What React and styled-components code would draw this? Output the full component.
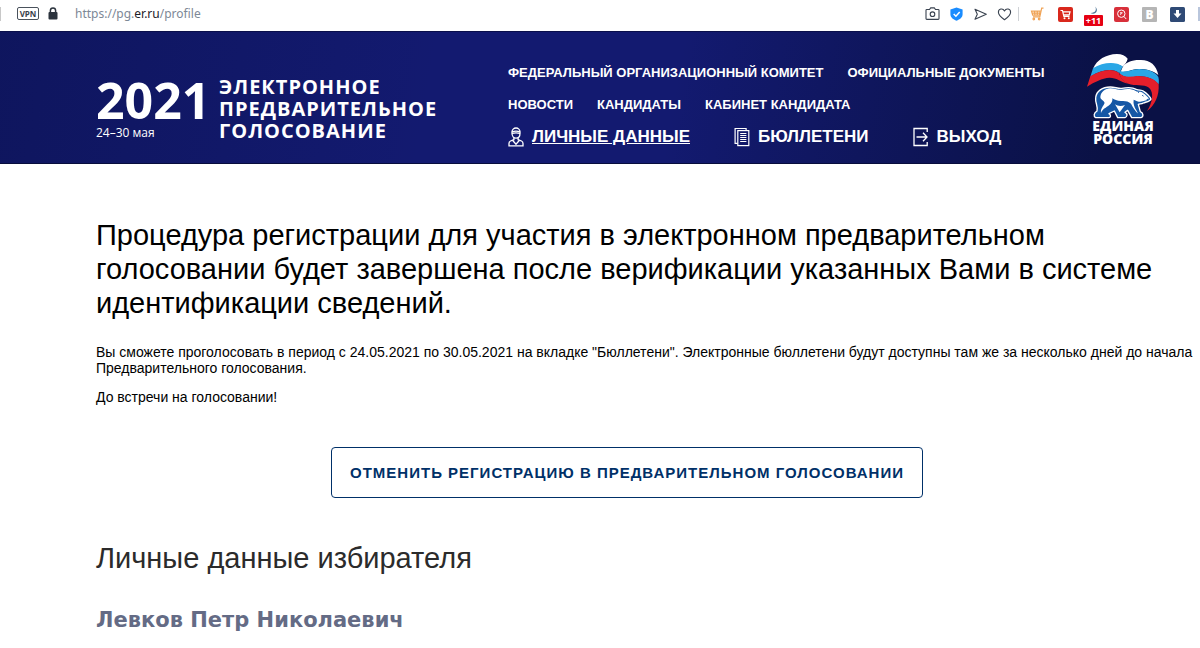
import React from 'react';
import styled, { createGlobalStyle } from 'styled-components';

const GlobalStyle = createGlobalStyle`
  *, *::before, *::after {
    box-sizing: border-box;
  }

  body {
    margin: 0;
    background: #fff;
    color: #000;
    font-family: "Liberation Sans", Arial, sans-serif;
  }
`;

/* browser bar */

const BrowserBar = styled.div`
  display: flex;
  align-items: center;
  justify-content: space-between;
  height: 31px;
  padding-bottom: 4px;
  background: #fff;
`;

const AddressArea = styled.div`
  display: flex;
  align-items: center;
`;

const BarEdge = styled.span`
  width: ${props => (props.$end ? 2 : 1)}px;
  height: 14px;
  margin-left: ${props => (props.$end ? 13 : 0)}px;
  background: ${props => (props.$end ? '#b9c6dc' : '#c8c8c8')};
`;

const VpnBadge = styled.span`
  width: 22px;
  height: 13px;
  margin: 0 9px 0 16px;
  border: 1px solid #4a525c;
  border-radius: 2px;
  color: #39424d;
  font: bold 8px/11px "Open Sans", sans-serif;
  text-align: center;
`;

const Address = styled.span`
  margin-left: 17px;
  color: #7d8896;
  font: 12px/16px "Noto Sans", sans-serif;

  b {
    color: #1b2028;
    font-weight: 400;
  }
`;

const Tools = styled.div`
  display: flex;
  align-items: center;
  gap: ${props => props.$gap}px;
`;

const ToolButton = styled.button`
  position: relative;
  display: block;
  width: 15px;
  height: 16px;
  padding: 0;
  border: 0;
  background: none;
  color: #3a4350;

  svg {
    display: block;
    width: 15px;
    height: 16px;
  }
`;

const ToolDivider = styled.span`
  width: 1px;
  height: 14px;
  margin: 0 11px 0 6px;
  background: #cfd2d6;
`;

const ToolCount = styled.span`
  position: absolute;
  top: 9px;
  left: -2px;
  width: 19px;
  height: 11px;
  border-radius: 1px;
  background: #e60012;
  color: #fff;
  font: bold 9px/11px "Open Sans", sans-serif;
  text-align: center;
`;

/* site header */

const Header = styled.header`
  display: grid;
  grid-template-columns: 412px 1fr 74px;
  align-items: start;
  height: 133px;
  padding: 0 40px 0 96px;
  border-top: 1px solid #0a0f4a;
  border-bottom: 1px solid #080d3c;
  background:
    linear-gradient(100deg, rgba(10, 17, 76, 0.5) 0%, rgba(16, 26, 112, 0) 36%, rgba(16, 26, 112, 0) 56%, #0a1145 92%),
    #131a70;
  color: #fff;
`;

const Brand = styled.a`
  display: flex;
  gap: 12px;
  padding-top: 44px;
  color: #fff;
  font-family: "Open Sans", "Noto Sans", sans-serif;
  text-decoration: none;
`;

const BrandDate = styled.div`
  width: 111px;
`;

const BrandYear = styled.div`
  font-size: 50px;
  font-weight: 700;
  line-height: 48px;
`;

const BrandDays = styled.div`
  font-size: 12px;
  line-height: 18px;
`;

const BrandTitle = styled.div`
  font-size: 20px;
  font-weight: 700;
  line-height: 22px;
  letter-spacing: 1px;
`;

const Nav = styled.nav`
  display: flex;
  flex-direction: column;
  padding-top: 25px;
`;

const NavRow = styled.div`
  display: flex;
  gap: ${props => (props.$large ? 44 : 24)}px;
  line-height: 32px;
  white-space: nowrap;
`;

const NavLink = styled.a`
  color: #fff;
  font-size: 13px;
  font-weight: 700;
  text-decoration: none;
`;

const AccountLink = styled.a`
  display: flex;
  align-items: center;
  gap: 8px;
  color: #fff;
  font-size: 17px;
  font-weight: 700;
  text-decoration: none;

  span {
    text-decoration: ${props => (props.$active ? 'underline' : 'none')};
  }

  svg {
    width: 16px;
    height: 20px;
  }
`;

const Party = styled.a`
  display: flex;
  flex-direction: column;
  align-items: center;
  padding-top: 21px;
  color: #fff;
  font: 800 14px/13px "Open Sans", "Noto Sans", sans-serif;
  text-align: center;
  text-decoration: none;

  svg {
    display: block;
    width: 74px;
    height: 66px;
  }
`;

/* page */

const Main = styled.main`
  padding: 54px 42px 16px 96px;
`;

const Notice = styled.h1`
  margin: 0 0 24px;
  font-size: 29px;
  font-weight: 400;
  line-height: 34px;
`;

const Text = styled.p`
  margin: 0 -36px 13px 0;
  font-size: 14px;
  line-height: 16px;
`;

const CancelButton = styled.button`
  display: block;
  height: 51px;
  margin: 42px auto 43px;
  padding: 0 18px;
  border: 1px solid #003068;
  border-radius: 4px;
  background: #fff;
  color: #003068;
  font: bold 15px/24px "Liberation Sans", Arial, sans-serif;
  letter-spacing: 1px;
  white-space: nowrap;
`;

const SectionTitle = styled.h2`
  margin: 0 0 31px;
  color: #2b2b2b;
  font-size: 29px;
  font-weight: 400;
  line-height: 34px;
`;

const VoterName = styled.h3`
  margin: 0;
  color: #646b85;
  font: bold 21px/28px "DejaVu Sans", sans-serif;
`;

function LockIcon() {
  return (
    <svg width="10" height="13" viewBox="0 0 10 13" aria-hidden="true">
      <path d="M2.4 6V3.6a2.6 2.6 0 0 1 5.2 0V6" fill="none" stroke="#2b333d" strokeWidth="1.5" />
      <rect x="0.5" y="5" width="9" height="7.4" rx="1" fill="#2b333d" />
    </svg>
  );
}

function CameraIcon() {
  return (
    <svg viewBox="0 0 15 16" fill="none" stroke="currentColor" strokeWidth="1.1">
      <path d="M1.8 3.5h2.7l1.200-1.600h3.600l1.200 1.600h2.700q.8 0 .8.8v8.300q0 .8-.8.8H1.800q-.8 0-.8-.8V4.300q0-.8.8-.8z" />
      <circle cx="7.5" cy="8.2" r="2.3" />
    </svg>
  );
}

function ShieldIcon() {
  return (
    <svg viewBox="0 0 15 16">
      <path d="M7.5 1.6 13.6 3.5V8c0 3.6-2.8 5.4-6.1 6.7C4.2 13.4 1.4 11.6 1.4 8V3.5z" fill="#1a8cff" />
      <path d="m4.7 8 2.2 2.2L10.7 6" fill="none" stroke="#fff" strokeWidth="1.5" />
    </svg>
  );
}

function SendIcon() {
  return (
    <svg viewBox="0 0 15 16" fill="none" stroke="currentColor" strokeWidth="1.1" strokeLinejoin="round">
      <path d="M2 3.300 13.300 8.300 2 13.300 4.300 8.300z" />
    </svg>
  );
}

function HeartIcon() {
  return (
    <svg viewBox="0 0 15 16" fill="none" stroke="currentColor" strokeWidth="1.1" strokeLinejoin="round">
      <path d="M7.500 13.800C4 11.200 1.400 8.900 1.400 6.200c0-3.400 4.400-4.500 6.100-1.200 1.700-3.300 6.100-2.200 6.100 1.200 0 2.700-2.600 5-6.100 7.600z" />
    </svg>
  );
}

function OrangeCartIcon() {
  return (
    <svg viewBox="0 0 15 16" fill="none" stroke="#f0a355" strokeWidth="1.2">
      <path d="M13.500 2.200h-1.800L9.800 10.800H3" />
      <path d="M1.500 5.200h8.700l-.8 4H2.700zM4.500 5.200l.4 4M7.300 5.200v4M2 7.200h8" />
      <circle cx="3.800" cy="13" r=".8" />
      <circle cx="9.200" cy="13" r=".8" />
    </svg>
  );
}

function RedCartIcon() {
  return (
    <svg viewBox="0 0 15 16">
      <rect y="1" width="15" height="15" rx="2" fill="#d9281c" />
      <path d="M2.500 4.500h2l1.400 5.800h5.600M5 5.900h7l-.8 3H5.700" fill="none" stroke="#fff" strokeWidth="1.2" />
      <circle cx="6.500" cy="12.300" r="1" fill="#fff" />
      <circle cx="10.800" cy="12.300" r="1" fill="#fff" />
    </svg>
  );
}

function MoonIcon() {
  return (
    <svg viewBox="0 0 15 16">
      <path d="M9 .5c2 3 .6 6.600-4.600 6.400 4.700 2.800 9.200-2.400 4.600-6.400z" fill="#4f7696" />
    </svg>
  );
}

function RedSearchIcon() {
  return (
    <svg viewBox="0 0 15 16">
      <rect y="1" width="15" height="15" rx="2" fill="#d8303a" />
      <circle cx="7.300" cy="7.700" r="3.700" fill="none" stroke="#fff" strokeWidth="1" />
      <path d="m9.900 10.400 2.300 2.600M6 6.800h2.600M6.500 8.800l.9-2" fill="none" stroke="#fff" strokeWidth="1" />
    </svg>
  );
}

function GreyLetterIcon() {
  return (
    <svg viewBox="0 0 15 16">
      <rect y="1" width="15" height="15" rx="1" fill="#b5b5b5" />
      <text x="7.500" y="12.500" textAnchor="middle" fill="#fff" fontFamily="Open Sans, sans-serif" fontSize="12" fontWeight="800">B</text>
    </svg>
  );
}

function DownloadIcon() {
  return (
    <svg viewBox="0 0 15 16">
      <rect y="1" width="15" height="15" rx="1.5" fill="#2f4a75" />
      <path d="M6 4h3v3.500h2.500L7.500 12 3.500 7.500H6z" fill="#fff" />
    </svg>
  );
}

function PersonIcon() {
  return (
    <svg viewBox="0 0 16 20" fill="none" stroke="currentColor" strokeWidth="1.3" aria-hidden="true">
      <path d="M4 6.200V4.800a4 3.800 0 0 1 8 0v1.400c0 3-1.700 5-4 5s-4-2-4-5z" />
      <path d="M4 4.800q4-1.400 8 0M4 6.500q4-1.400 8 0" />
      <path d="M5.900 10.500v2.200L2.500 14C1.300 14.500 1 15.300 1 16.500v2.300h14v-2.300c0-1.200-.3-2-1.500-2.500l-3.400-1.300v-2.200" />
      <path d="m4.500 13.300 3.500 4 3.500-4" />
    </svg>
  );
}

function BallotIcon() {
  return (
    <svg viewBox="0 0 16 20" fill="none" stroke="currentColor" strokeWidth="1.2" aria-hidden="true">
      <path d="M3.600 16.400H1.100V1.500h11v2" />
      <rect x="3.800" y="3.600" width="11" height="15" />
      <path d="M6.200 6.500h6.200M6.200 8.500h6.200M6.200 10.500h6.200M6.200 12.500h6.200M6.200 14.500h6.200" strokeWidth="1" />
    </svg>
  );
}

function ExitIcon() {
  return (
    <svg viewBox="0 0 16 20" fill="none" stroke="currentColor" strokeWidth="1.3" aria-hidden="true">
      <path d="M14.200 5V1.500H1v17h13.200V15" />
      <path d="M3.500 10h10.200M10 5.800l4 4.200-4 4.200" />
    </svg>
  );
}

// white-blue-red flag flowing over the bear
function PartyEmblem() {
  return (
    <svg viewBox="11 6 222 198" aria-hidden="true">
      <path d="M32 53C44 26 70 10 104 9C118 9 130 14 136 23C134 32 128 40 121 47C104 34 64 34 32 53z" fill="#fff" />
      <path d="M121 48C132 32 150 26 176 27C204 28 222 42 228 72C206 54 170 50 146 58C134 62 124 64 115 62z" fill="#fff" />
      <path d="M32 52C62 32 102 32 121 46C118 54 114 60 111 67C92 50 56 56 24 77z" fill="#2aa7e6" />
      <path d="M114 60C128 66 146 55 170 54C200 54 220 64 228 78C230 86 230 92 229 100C212 80 182 72 158 77C140 80 122 80 111 67z" fill="#2aa7e6" />
      <path d="M24 76C54 56 92 50 110 66C114 80 124 92 138 98C112 92 104 80 82 80C58 82 38 92 14 107z" fill="#e51f2b" />
      <path d="M111 66C126 82 146 76 166 75C196 75 218 84 229 100C231 134 218 164 194 180C210 156 216 124 200 110C184 98 158 106 138 98C122 92 114 82 111 66z" fill="#e51f2b" />
      <path d="M40 140C42 120 60 108 84 108C98 108 106 113 118 112C134 109 150 108 162 115C172 119 178 115 184 121C192 126 204 138 206 144C204 152 190 153 183 156C178 160 172 158 168 160L174 182C184 186 184 198 176 200H148L136 178L128 184C138 188 134 198 128 200H106L96 180L80 188C86 192 86 199 80 200H40C33 196 34 186 44 180C48 166 38 156 40 140z" fill="#1557a5" stroke="#fff" strokeWidth="4" strokeLinejoin="round" />
      <path d="M54 138C56 122 68 113 84 112C98 113 106 118 118 116C134 113 148 113 160 120C168 124 176 120 181 125C190 131 197 138 201 144C197 148 188 148 181 151C172 154 164 151 154 146C152 158 156 168 162 178C164 182 166 186 168 188C160 182 152 170 146 158C138 150 126 149 116 150C104 150 96 146 90 142C92 156 80 164 70 170C62 174 58 180 56 186C54 174 62 166 66 158C70 150 54 148 54 138z" fill="#fff" />
      <path d="M98 160C108 167 118 166 128 162L112 184z" fill="#fff" />
      <path d="M180 132l3 4M193 146l7-2M166 122l4 3" stroke="#1557a5" strokeWidth="3" />
    </svg>
  );
}

const browserTools = [
  { label: 'Снимок экрана', icon: <CameraIcon /> },
  { label: 'Защита', icon: <ShieldIcon /> },
  { label: 'Отправить', icon: <SendIcon /> },
  { label: 'В избранное', icon: <HeartIcon /> }
];

const extensions = [
  { label: 'Покупки', icon: <OrangeCartIcon /> },
  { label: 'Корзина', icon: <RedCartIcon /> },
  { label: 'Погода', icon: <MoonIcon />, count: '+11' },
  { label: 'Поиск', icon: <RedSearchIcon /> },
  { label: 'Блокировка', icon: <GreyLetterIcon /> },
  { label: 'Загрузки', icon: <DownloadIcon /> }
];

const navRows = [
  ['Федеральный организационный комитет', 'Официальные документы'],
  ['Новости', 'Кандидаты', 'Кабинет кандидата']
];

const accountLinks = [
  { label: 'Личные данные', icon: <PersonIcon />, active: true },
  { label: 'Бюллетени', icon: <BallotIcon /> },
  { label: 'Выход', icon: <ExitIcon /> }
];

function ToolList({ items, gap }) {
  return (
    <Tools $gap={gap}>
      {items.map(item => (
        <ToolButton key={item.label} type="button" aria-label={item.label}>
          {item.icon}
          {item.count ? <ToolCount>{item.count}</ToolCount> : null}
        </ToolButton>
      ))}
    </Tools>
  );
}

export default function App() {
  return (
    <>
      <GlobalStyle />
      <BrowserBar>
        <AddressArea>
          <BarEdge />
          <VpnBadge>VPN</VpnBadge>
          <LockIcon />
          <Address>https://pg.<b>er.ru</b>/profile</Address>
        </AddressArea>
        <Tools $gap={0}>
          <ToolList items={browserTools} gap={9} />
          <ToolDivider />
          <ToolList items={extensions} gap={13} />
          <BarEdge $end />
        </Tools>
      </BrowserBar>

      <Header>
        <Brand href="#">
          <BrandDate>
            <BrandYear>2021</BrandYear>
            <BrandDays>24–30 мая</BrandDays>
          </BrandDate>
          <BrandTitle>
            ЭЛЕКТРОННОЕ<br />
            ПРЕДВАРИТЕЛЬНОЕ<br />
            ГОЛОСОВАНИЕ
          </BrandTitle>
        </Brand>

        <Nav>
          {navRows.map(row => (
            <NavRow key={row[0]}>
              {row.map(label => (
                <NavLink key={label} href="#">{label.toUpperCase()}</NavLink>
              ))}
            </NavRow>
          ))}
          <NavRow $large>
            {accountLinks.map(link => (
              <AccountLink key={link.label} href="#" $active={link.active}>
                {link.icon}
                <span>{link.label.toUpperCase()}</span>
              </AccountLink>
            ))}
          </NavRow>
        </Nav>

        <Party href="#">
          <PartyEmblem />
          ЕДИНАЯ<br />РОССИЯ
        </Party>
      </Header>

      <Main>
        <Notice>
          Процедура регистрации для участия в электронном предварительном голосовании
          будет завершена после верификации указанных Вами в системе идентификации сведений.
        </Notice>
        <Text>
          Вы сможете проголосовать в период с 24.05.2021 по 30.05.2021 на вкладке "Бюллетени".
          Электронные бюллетени будут доступны там же за несколько дней до начала
          Предварительного голосования.
        </Text>
        <Text>До встречи на голосовании!</Text>
        <CancelButton type="button">
          ОТМЕНИТЬ РЕГИСТРАЦИЮ В ПРЕДВАРИТЕЛЬНОМ ГОЛОСОВАНИИ
        </CancelButton>
        <SectionTitle>Личные данные избирателя</SectionTitle>
        <VoterName>Левков Петр Николаевич</VoterName>
      </Main>
    </>
  );
}
